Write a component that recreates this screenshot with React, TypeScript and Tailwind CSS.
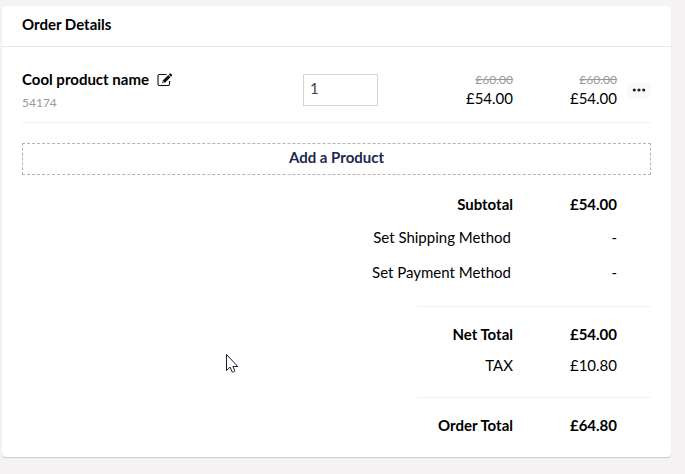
import React, { useState } from "react";

type Row = { label: string; value: string; strong?: boolean; action?: boolean };

const methodRows: Row[] = [
  { label: "Set Shipping Method", value: "-", action: true },
  { label: "Set Payment Method", value: "-", action: true },
];

const netRows: Row[] = [
  { label: "Net Total", value: "£54.00", strong: true },
  { label: "TAX", value: "£10.80" },
];

function TotalRow({ row, height }: { row: Row; height: string }) {
  return (
    <div className={`flex items-center justify-end pr-[34px] text-right ${height} ${row.strong ? "font-bold" : ""}`}>
      <dt className="flex-1">
        {row.action ? (
          <button type="button" className="cursor-pointer pr-0.5">
            {row.label}
          </button>
        ) : (
          row.label
        )}
      </dt>
      <dd className="w-[104px]">{row.value}</dd>
    </div>
  );
}

function Divider() {
  return <div className="ml-auto h-px w-[234px] bg-[#f1f1f1]" />;
}

function EditIcon() {
  return (
    <svg width="16" height="14" viewBox="0 0 16 14" fill="none" aria-hidden="true">
      <path
        d="M9.5 1.5H2.5A1.5 1.5 0 0 0 1 3v8a1.5 1.5 0 0 0 1.5 1.500h8.500a1.500 1.500 0 0 0 1.500-1.500V8"
        stroke="#111"
        strokeWidth="1.1"
      />
      <path d="M5.2 10.2 6 7.3 11.3 2l2.2 2.2L8.2 9.5z" fill="#111" />
      <path d="m11.8 1.5 1-1q.5-.4 1 0l1.2 1.2q.4.5 0 1l-1 1z" fill="#111" />
      <path d="m6.3 8.1 1.1 1.1-1.1.4-.4-.4z" fill="#fff" />
    </svg>
  );
}

function PriceCell({ oldPrice, price }: { oldPrice: string; price: string }) {
  return (
    <td className="p-0 pt-3 text-right">
      <s className="block text-xs leading-4 text-[#999]">{oldPrice}</s>
      <span className="block leading-5">{price}</span>
    </td>
  );
}

export default function App() {
  const [quantity, setQuantity] = useState("1");

  return (
    <main className="relative min-h-screen bg-[#f5f3f4] pt-1.5 pr-3.5 pb-4 pl-0.5 font-['Lato',sans-serif] text-[15px] leading-5 text-black">
      <section className="rounded-sm bg-white pb-4 shadow-[0_1px_1px_#c8c8c8]">
        <header className="border-b border-[#e8e8e8] px-5 pt-2 pb-3">
          <h1 className="font-bold">Order Details</h1>
        </header>

        <div className="px-5">
          <table className="w-full table-fixed border-collapse">
            <colgroup>
              <col />
              <col className="w-[75px]" />
              <col className="w-[135px]" />
              <col className="w-[104px]" />
              <col className="w-[34px]" />
            </colgroup>
            <tbody>
              <tr className="h-[75px] border-b border-[#f1f1f1]">
                <td className="p-0 pt-3.5">
                  <div className="flex items-center gap-2 font-bold">
                    Cool product name
                    <button type="button" aria-label="Edit product" className="cursor-pointer pt-0.5">
                      <EditIcon />
                    </button>
                  </div>
                  <div className="mt-1 text-xs leading-5 text-[#999]">54174</div>
                </td>
                <td className="p-0 pt-3">
                  <input
                    type="text"
                    inputMode="numeric"
                    aria-label="Quantity"
                    value={quantity}
                    onChange={(e) => setQuantity(e.target.value)}
                    className="block h-8 w-full border border-[#d4d4d4] bg-white px-1.5 pb-1 text-[#444]"
                  />
                </td>
                <PriceCell oldPrice="£60.00" price="£54.00" />
                <PriceCell oldPrice="£60.00" price="£54.00" />
                <td className="p-0 pt-3">
                  <button
                    type="button"
                    aria-label="More actions"
                    className="ml-auto flex h-[15px] w-6 cursor-pointer items-center justify-center rounded-sm bg-[#f9f9f9]"
                  >
                    <svg width="14" height="4" viewBox="0 0 14 4" fill="#222" aria-hidden="true">
                      <circle cx="2.3" cy="2" r="1.6" />
                      <circle cx="7" cy="2" r="1.6" />
                      <circle cx="11.7" cy="2" r="1.6" />
                    </svg>
                  </button>
                </td>
              </tr>
            </tbody>
          </table>

          <button
            type="button"
            className="mt-5 block h-8 w-full cursor-pointer border border-dashed border-[#b5b5b5] pb-1 text-center leading-5 font-bold text-[#1d2750]"
          >
            Add a Product
          </button>

          <dl className="mt-[13px]">
            <TotalRow row={{ label: "Subtotal", value: "£54.00", strong: true }} height="h-8" />
            {methodRows.map((row) => (
              <TotalRow key={row.label} row={row} height="h-[35px]" />
            ))}
          </dl>
          <div className="pt-4">
            <Divider />
          </div>
          <dl className="pt-3 pb-4">
            {netRows.map((row) => (
              <TotalRow key={row.label} row={row} height="h-[31px]" />
            ))}
          </dl>
          <Divider />
          <dl className="pt-3">
            <TotalRow row={{ label: "Order Total", value: "£64.80", strong: true }} height="h-[31px]" />
          </dl>
        </div>
      </section>

      <svg
        className="pointer-events-none absolute top-[353px] left-[225px]"
        width="14"
        height="21"
        viewBox="0 0 14 21"
        aria-hidden="true"
      >
        <path
          d="M1.5 1.5v16l3.6-3.4 2 4.7q1.4.7 2.8-.9l-2-4.4h4.9z"
          fill="#fff"
          stroke="#1c1a2b"
          strokeWidth="1"
        />
      </svg>
    </main>
  );
}
